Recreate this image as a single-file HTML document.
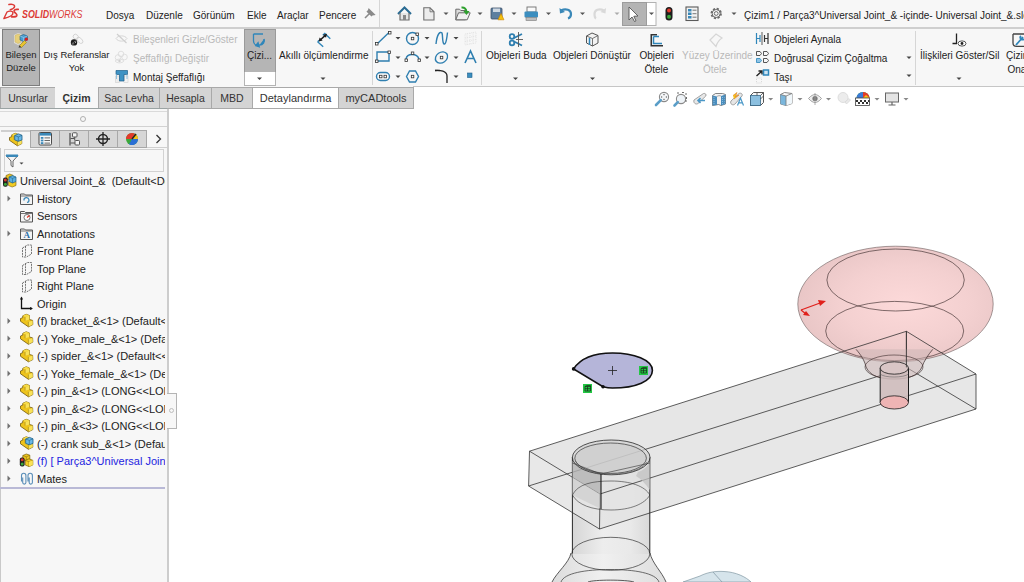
<!DOCTYPE html>
<html><head><meta charset="utf-8">
<style>
*{margin:0;padding:0;box-sizing:border-box}
html,body{width:1024px;height:582px;overflow:hidden;background:#fff;font-family:"Liberation Sans",sans-serif;color:#222}
.a{position:absolute}
.t{position:absolute;white-space:nowrap;line-height:1;font-size:11px}
#menubar{left:0;top:0;width:1024px;height:27px;background:#f7f7f7}
#sep1{left:0;top:27px;width:1024px;height:2px;background:#cfcfcf}
#ribbon{left:0;top:29px;width:1024px;height:58px;background:#f7f7f7}
#ribline{left:413px;top:86px;width:611px;height:2px;background:#c6c6c6}
#tabs{left:0;top:87px;width:1024px;height:21px;background:#fff}
.tab{position:absolute;top:87px;height:22px;background:#d4d4d4;border:1px solid #a9a9a9;font-size:10.5px;text-align:center;line-height:20px;color:#333}
#left{left:0;top:108px;width:167px;height:474px;background:#f7f7f7}
#lborder{left:167px;top:108px;width:2px;height:474px;background:#cdcdcd}
.tree{position:absolute;left:36px;font-size:11px;white-space:nowrap;line-height:1;color:#222}
.dis{color:#b9b9b9}
.vsep{position:absolute;width:1px;background:#d6d6d6}
.arr{position:absolute;width:0;height:0;border-left:3px solid transparent;border-right:3px solid transparent;border-top:3px solid #444}
</style></head><body>
<div id="menubar" class="a"></div>
<div id="sep1" class="a"></div>
<div id="ribbon" class="a"></div>
<div id="ribline" class="a"></div>
<div id="tabs" class="a"></div>
<div id="left" class="a"></div>
<div id="lborder" class="a"></div>


<!-- VIEWPORT -->
<svg class="a" style="left:0;top:0" width="1024" height="582" viewBox="0 0 1024 582">
<defs>
<radialGradient id="tor" cx="0.55" cy="0.5" r="0.6">
<stop offset="0" stop-color="#fcd5d5"/><stop offset="0.55" stop-color="#f2cbcb"/><stop offset="1" stop-color="#e4bebe"/>
</radialGradient>
<linearGradient id="cyl" x1="0" x2="1" y1="0" y2="0">
<stop offset="0" stop-color="#d6d6d6"/><stop offset="0.4" stop-color="#ededed"/><stop offset="0.75" stop-color="#e9e9e9"/><stop offset="1" stop-color="#d9d9d9"/>
</linearGradient>
<linearGradient id="bulb" x1="0" x2="1" y1="0" y2="0">
<stop offset="0" stop-color="#dcdcdc"/><stop offset="0.45" stop-color="#f0f0f0"/><stop offset="1" stop-color="#dedede"/>
</linearGradient>
</defs>
<!-- bulb bottom -->
<path d="M571,553 C569,563 557,572 552,582 L666,582 C662,572 652,563 650,553 Z" fill="url(#bulb)"/>
<path d="M571,553 C569,563 557,572 552,582 M650,553 C652,563 662,572 666,582" fill="none" stroke="#333" stroke-width="0.8"/>
<path d="M561,582 C564,573 586,569.5 610,569.5 C634,569.5 656,573 659,582" fill="none" stroke="#333" stroke-width="0.7"/>
<path d="M588,582 C594,579.5 626,579.5 634,582" fill="none" stroke="#333" stroke-width="0.8"/>
<!-- light blue part -->
<path d="M683,582 L700,576 C708,572 716,571 724,571.5 C736,572 746,577 751,582 Z" fill="#d6e4eb" stroke="#7f96a2" stroke-width="0.7"/>
<path d="M713,572 L722,582" stroke="#7f96a2" stroke-width="0.7"/>
<!-- cylinder body -->
<rect x="572" y="457" width="78" height="97" fill="url(#cyl)"/>
<ellipse cx="610.8" cy="553.8" rx="39" ry="16.5" fill="none" stroke="#333" stroke-width="0.7"/>
<!-- box faces -->
<polygon points="529.5,451.2 906.4,331.3 976,374 600,494" fill="#e0e0e0" fill-opacity="0.8"/>
<polygon points="600,494 976,374 976,409 599.5,529" fill="#e3e3e3" fill-opacity="0.85"/>
<polygon points="529.5,451.2 600,494 599.5,529 528.6,486" fill="#e4e4e4" fill-opacity="0.85"/>
<!-- torus -->
<ellipse cx="895.5" cy="304" rx="97.7" ry="57.8" fill="url(#tor)" fill-opacity="0.9" stroke="#6a5a5a" stroke-width="0.6"/>
<ellipse cx="895.6" cy="280" rx="68.7" ry="31" fill="none" stroke="#4a3a3a" stroke-width="0.7"/>
<ellipse cx="894.7" cy="331" rx="69" ry="29.6" fill="none" stroke="#4a3a3a" stroke-width="0.7"/>
<!-- box edges -->
<g stroke="#2a2a2a" stroke-width="0.75" fill="none">
<path d="M529.5,451.2 L906.4,331.3 L976,374 L600,494 Z"/>
<path d="M528.6,486 L906.4,367.4 L976,409 L599.5,529 Z"/>
<path d="M529.5,451.2 L528.6,486 M906.4,331.3 L906.4,367.4 M976,374 L976,409 M600,494 L599.5,529"/>
</g>
<!-- cylinder edges -->
<line x1="572.4" y1="457" x2="572.4" y2="553.5" stroke="#2a2a2a" stroke-width="1"/>
<line x1="649.8" y1="457" x2="649.8" y2="553.5" stroke="#2a2a2a" stroke-width="1"/>
<!-- nut / cylinder top -->
<polygon points="572.4,461 601,474 601,494.5 572.4,477" fill="#b4b4b4" fill-opacity="0.8"/>
<polygon points="572.4,477 601,494.5 601,509 572.4,495" fill="#cdcdcd" fill-opacity="0.7"/>
<path d="M649.8,461 L649.8,490 C646,484 641,479 636,476 L638,472 C644,470 648,466 649.8,461 Z" fill="#c2c2c2" fill-opacity="0.75"/>
<ellipse cx="611.2" cy="457.4" rx="38.8" ry="17.4" fill="#d2d2d2" fill-opacity="0.7" stroke="#2a2a2a" stroke-width="0.8"/>
<ellipse cx="610.6" cy="458.2" rx="35.8" ry="15.2" fill="#cccccc" fill-opacity="0.6" stroke="#333" stroke-width="0.7"/>
<path d="M575.5,461 C580,470 595,474 611,474 C628,474 642,470 647,462" fill="none" stroke="#555" stroke-width="0.6"/>
<path d="M572.4,495 C578,484 592,481 611,481 C630,481 645,486 649.8,495 C645,504 630,510 611,510 C592,510 578,505 572.4,495" fill="none" stroke="#333" stroke-width="0.6"/>
<line x1="601" y1="474" x2="601" y2="509" stroke="#1a1a1a" stroke-width="1.1"/>
<path d="M572.4,463 L601,474 L650,463" fill="none" stroke="#333" stroke-width="0.6"/>
<!-- small cylinder under torus -->
<path d="M856,349.3 C862,356 865,362 866,367 C870,376 880,379 894,379 C908,379 918,376 922,367 C924,361 928,355 932.8,349.3" fill="#cdb6b6" fill-opacity="0.55" stroke="#3a2a2a" stroke-width="0.7"/>
<ellipse cx="894" cy="367" rx="29" ry="12" fill="none" stroke="#3a2a2a" stroke-width="0.6"/>
<rect x="880.2" y="368" width="28.3" height="34.4" fill="#cfbcbc" fill-opacity="0.9"/>
<line x1="880.2" y1="368" x2="880.2" y2="402.4" stroke="#1a1a1a" stroke-width="1"/>
<line x1="908.5" y1="368" x2="908.5" y2="402.4" stroke="#1a1a1a" stroke-width="1"/>
<ellipse cx="894.3" cy="402.4" rx="14.2" ry="6.6" fill="#eeb4b4" stroke="#1a1a1a" stroke-width="0.8"/>
<ellipse cx="894.3" cy="368" rx="14.2" ry="6.2" fill="#d9c6c6" stroke="#1a1a1a" stroke-width="0.8"/>
<path d="M880.2,374 C884,378 904,378 908.5,374" fill="none" stroke="#555" stroke-width="0.5"/>
<line x1="906.4" y1="331.3" x2="906.4" y2="367.4" stroke="#2a2a2a" stroke-width="0.7"/>
<!-- red triad -->
<g stroke="#e0201b" stroke-width="1.3" fill="#e0201b">
<line x1="801" y1="310" x2="820" y2="303"/>
<polygon points="826,301 818,300 820,306" stroke="none"/>
<line x1="801" y1="310" x2="806" y2="314"/>
<polygon points="810,316 803,315 806,311" stroke="none"/>
</g>
<!-- sketch -->
<path d="M573.6,368.9 C582,356 598,353 612.5,353 C634,353 652.4,360 652.4,370.5 C652.4,381 636,388 612.5,388 C609,388 606,387.5 603,386.8 Z" fill="#b5b5d9" stroke="#111" stroke-width="1.6"/>
<circle cx="573.6" cy="368.9" r="1.8" fill="#111"/>
<circle cx="603" cy="386.8" r="1.8" fill="#111"/>
<path d="M608,370.5 h9 M612.5,366 v9" stroke="#222" stroke-width="0.8"/>
<rect x="639" y="366" width="9" height="9" fill="#22c744"/>
<rect x="583" y="384" width="9" height="9" fill="#22c744"/>
<g fill="none" stroke="#1a2a1a" stroke-width="0.7">
<path d="M641,368.5 L643,367.5 H646.5 V373 H641 Z M641,368.5 H646.5 M643.5,368.5 V373 M641,370.7 H646.5"/>
<path d="M585,386.5 L587,385.5 H590.5 V391 H585 Z M585,386.5 H590.5 M587.5,386.5 V391 M585,388.7 H590.5"/>
</g>
</svg>
<!-- MENU -->
<div class="t" style="left:22px;top:10px;font-size:10.3px;font-weight:bold;font-style:italic;color:#dc3a36;transform:scaleX(0.86);transform-origin:0 0">SOLID<span style="font-weight:normal">WORKS</span></div>
<div class="t" style="left:106px;top:11px;font-size:10px">Dosya</div>
<div class="t" style="left:146px;top:11px;font-size:10px">Düzenle</div>
<div class="t" style="left:193px;top:11px;font-size:10px">Görünüm</div>
<div class="t" style="left:247px;top:11px;font-size:10px">Ekle</div>
<div class="t" style="left:277px;top:11px;font-size:10px">Araçlar</div>
<div class="t" style="left:319px;top:11px;font-size:10px">Pencere</div>
<div class="t" style="left:744px;top:11px;font-size:10px">Çizim1 / Parça3^Universal Joint_&amp; -içinde- Universal Joint_&amp;.sldasm</div>

<!-- RIBBON -->
<div class="a" style="left:2px;top:29px;width:38px;height:57px;background:#b5b5b5;border:1px solid #7d7d7d"></div>
<div class="t" style="left:3px;top:50px;width:36px;text-align:center;font-size:9.5px">Bileşen</div>
<div class="t" style="left:3px;top:63px;width:36px;text-align:center;font-size:9.5px">Düzele</div>
<div class="t" style="left:42px;top:50px;width:69px;text-align:center;font-size:9.5px">Dış Referanslar</div>
<div class="t" style="left:42px;top:63px;width:69px;text-align:center;font-size:9.5px">Yok</div>
<div class="t dis" style="left:133px;top:35px;font-size:10px">Bileşenleri Gizle/Göster</div>
<div class="t dis" style="left:133px;top:54px;font-size:10px">Şeffaflığı Değiştir</div>
<div class="t" style="left:133px;top:72.5px;font-size:10px">Montaj Şeffaflığı</div>

<div class="a" style="left:244px;top:29px;width:32px;height:57px;background:#fff;border:1px solid #b4b4b4"></div>
<div class="a" style="left:244px;top:29px;width:32px;height:43px;background:#b5b5b5;border:1px solid #9a9a9a;border-bottom:none"></div>
<div class="t" style="left:247px;top:51px;font-size:10px">Çizi...</div>
<div class="t" style="left:279px;top:51px;font-size:10px">Akıllı ölçümlendirme</div>
<div class="vsep" style="left:372px;top:31px;height:54px"></div>
<div class="vsep" style="left:481px;top:31px;height:54px"></div>
<div class="t" style="left:486px;top:51px;font-size:10px">Objeleri Buda</div>
<div class="t" style="left:553px;top:51px;font-size:10px">Objeleri Dönüştür</div>
<div class="t" style="left:639.5px;top:51px;font-size:10px">Objeleri</div>
<div class="t" style="left:644.5px;top:64.5px;font-size:10px">Ötele</div>
<div class="t dis" style="left:682px;top:51px;font-size:10px">Yüzey Üzerinde</div>
<div class="t dis" style="left:703px;top:64.5px;font-size:10px">Ötele</div>
<div class="t" style="left:774px;top:34.5px;font-size:10px">Objeleri Aynala</div>
<div class="t" style="left:774px;top:54px;font-size:10px">Doğrusal Çizim Çoğaltma</div>
<div class="t" style="left:774px;top:73px;font-size:10px">Taşı</div>
<div class="vsep" style="left:915px;top:31px;height:54px"></div>
<div class="t" style="left:920px;top:51px;font-size:10px">İlişkileri Göster/Sil</div>
<div class="t" style="left:1006px;top:51px;font-size:10px">Çizim</div>
<div class="t" style="left:1007.5px;top:64.5px;font-size:10px">Onay</div>

<!-- TABS -->
<div class="tab" style="left:0;width:56px">Unsurlar</div>
<div class="tab" style="left:55px;width:43px;background:#f7f7f7;border-color:#f7f7f7;font-weight:bold">Çizim</div>
<div class="tab" style="left:98px;width:62px">Sac Levha</div>
<div class="tab" style="left:159px;width:53px">Hesapla</div>
<div class="tab" style="left:211px;width:42px">MBD</div>
<div class="tab" style="left:252px;width:87px;background:#fff;font-size:11px">Detaylandırma</div>
<div class="tab" style="left:338px;width:76px;font-size:11px">myCADtools</div>


<!-- LEFT PANEL DETAILS -->
<div class="a" style="left:0;top:108px;width:167px;height:1px;background:#9aa3a3"></div>
<div class="a" style="left:0;top:111px;width:167px;height:1px;background:#dadada"></div>
<div class="a" style="left:80px;top:116px;width:6px;height:6px;border:1px solid #b0b0b0;border-radius:50%"></div>
<div class="a" style="left:0;top:126px;width:167px;height:1px;background:#d2d2d2"></div>
<div class="a" style="left:1px;top:130px;width:30px;height:2px;background:#cfcfcf"></div>
<div class="a" style="left:30px;top:130px;width:30px;height:18px;background:#d6d6d6;border:1px solid #a8a8a8"></div>
<div class="a" style="left:59px;top:130px;width:30px;height:18px;background:#d6d6d6;border:1px solid #a8a8a8"></div>
<div class="a" style="left:88px;top:130px;width:30px;height:18px;background:#d6d6d6;border:1px solid #a8a8a8"></div>
<div class="a" style="left:117px;top:130px;width:30px;height:18px;background:#d6d6d6;border:1px solid #a8a8a8"></div>
<div class="a" style="left:147px;top:147px;width:20px;height:1px;background:#d0d0d0"></div>
<div class="a" style="left:4px;top:149px;width:160px;height:23px;border:1px solid #d2d2d2"></div>
<div class="a" style="left:0;top:148px;width:1px;height:434px;background:#c9c9c9"></div>
<div class="a" style="left:0;top:487px;width:165px;height:2px;background:#b9b9d6"></div>
<div class="a" style="left:167px;top:393px;width:10px;height:36px;background:#f7f7f7;border:1px solid #b4b4b4;border-left:none"></div>
<div class="a" style="left:169px;top:408px;width:5px;height:5px;border:1px solid #bdbdbd;border-radius:50%"></div>

<!-- TREE -->
<div class="a" style="left:0;top:170px;width:165px;height:320px;overflow:hidden">
<div class="tree" style="left:20px;top:6.3px">Universal Joint_&amp;&nbsp; (Default&lt;Default_Display State-1&gt;)</div>
<div class="tree" style="left:37px;top:23.8px">History</div>
<div class="tree" style="left:37px;top:41.3px">Sensors</div>
<div class="tree" style="left:37px;top:58.8px">Annotations</div>
<div class="tree" style="left:37px;top:76.3px">Front Plane</div>
<div class="tree" style="left:37px;top:93.8px">Top Plane</div>
<div class="tree" style="left:37px;top:111.3px">Right Plane</div>
<div class="tree" style="left:37px;top:128.8px">Origin</div>
<div class="tree" style="left:37px;top:146.3px">(f) bracket_&amp;&lt;1&gt; (Default&lt;&lt;Default&gt;_Display</div>
<div class="tree" style="left:37px;top:163.8px">(-) Yoke_male_&amp;&lt;1&gt; (Default&lt;&lt;Default</div>
<div class="tree" style="left:37px;top:181.3px">(-) spider_&amp;&lt;1&gt; (Default&lt;&lt;Default</div>
<div class="tree" style="left:37px;top:198.8px">(-) Yoke_female_&amp;&lt;1&gt; (Default&lt;&lt;</div>
<div class="tree" style="left:37px;top:216.3px">(-) pin_&amp;&lt;1&gt; (LONG&lt;&lt;LONG&gt;</div>
<div class="tree" style="left:37px;top:233.8px">(-) pin_&amp;&lt;2&gt; (LONG&lt;&lt;LONG&gt;</div>
<div class="tree" style="left:37px;top:251.3px">(-) pin_&amp;&lt;3&gt; (LONG&lt;&lt;LONG&gt;</div>
<div class="tree" style="left:37px;top:268.8px">(-) crank sub_&amp;&lt;1&gt; (Default&lt;Display</div>
<div class="tree" style="left:37px;top:286.3px;color:#2424e0">(f) [ Parça3^Universal Joint_&amp; ]</div>
<div class="tree" style="left:37px;top:303.8px">Mates</div>
</div>
<!-- UI ICONS -->
<svg class="a" style="left:0;top:0;pointer-events:none" width="1024" height="582" viewBox="0 0 1024 582">
<!-- DS logo -->
<g fill="none" stroke="#dc3a36" stroke-linecap="round" stroke-linejoin="round">
<path d="M8.9,4.6 C12,4 15,4.6 14.6,6.6 C14.2,8.2 12,9.2 10.3,9.7" stroke-width="1.5"/>
<path d="M3.9,18.5 L7,12 C9,10.6 12.5,10.8 13,12.6 C13.2,15 8.5,17.4 3.9,18.5" stroke-width="1.4"/>
<path d="M18.2,9.4 C15.5,9 13.6,9.8 14.2,11.6 C14.8,13.2 17.4,13.6 16.8,15.6 C16.3,17 13.5,17 11.6,16.9" stroke-width="1.7"/>
</g>
<!-- menu pin -->
<path d="M365,18 L369,14 M367,11 L372,16 M369,9.5 L374,14.5 L371,15 L368,12 Z" stroke="#8a8a8a" stroke-width="1.6" fill="#8a8a8a"/>
<line x1="379.5" y1="0" x2="379.5" y2="27" stroke="#d6d6d6"/>
<!-- home -->
<path d="M398,14 L404.5,7.5 L411,14" fill="none" stroke="#2a6b93" stroke-width="2"/>
<path d="M400,13 V20 H409 V13" fill="#e6e6e6" stroke="#6f6f6f" stroke-width="1.2"/>
<rect x="403" y="15" width="3" height="5" fill="#888"/>
<!-- new doc -->
<path d="M423.8,7.8 H430 L434,11.8 V20 H423.8 Z" fill="#ececec" stroke="#6f6f6f" stroke-width="1.1"/>
<path d="M430,7.8 V11.8 H434" fill="none" stroke="#6f6f6f" stroke-width="0.9"/>
<!-- open folder -->
<path d="M455.8,9.2 H459.5 L460.8,10.5 H465.5 V19.8 H455.8 Z" fill="#dcdcdc" stroke="#6a6a6a" stroke-width="1"/>
<path d="M458.5,12.8 H470.2 L467.2,19.8 H455.8 Z" fill="#f0f0f0" stroke="#6a6a6a" stroke-width="1"/>
<path d="M461.5,7.6 C464.5,7.3 466.3,8.8 466.5,12" fill="none" stroke="#2ea02e" stroke-width="2"/>
<path d="M463.3,11 L466.5,15 L469.5,11 Z" fill="#2ea02e"/>
<!-- save -->
<rect x="491" y="8" width="11" height="11" rx="1" fill="#5d7fa0" stroke="#3d4f66" stroke-width="0.8"/>
<rect x="493" y="8.5" width="7" height="3.5" fill="#cfd8e2"/>
<path d="M498,19.8 L501,13.5 L504,19.8 Z" fill="#f4c20d" stroke="#d08400" stroke-width="0.6"/>
<!-- print -->
<rect x="527" y="7" width="9" height="5" fill="#fafafa" stroke="#6f6f6f" stroke-width="0.9"/>
<rect x="524.5" y="11.5" width="13.5" height="6" rx="1" fill="#3c8ebf"/>
<rect x="526" y="17.5" width="10.5" height="3" fill="#bdbdbd" stroke="#7a7a7a" stroke-width="0.6"/>
<!-- undo -->
<path d="M561,10.5 C566,8 571,10 571,14 C571,16.5 569.5,18 568,18.5" fill="none" stroke="#3a88b8" stroke-width="2.2"/>
<path d="M559.5,8 L560,13.5 L565,12 Z" fill="#3a88b8"/>
<!-- redo -->
<path d="M604,10.5 C599,8 594.5,10 594.5,14 C594.5,16.5 595,18 596,18.5" fill="none" stroke="#d9d9d9" stroke-width="2.2"/>
<path d="M606,8 L605.5,13.5 L600.5,12 Z" fill="#d9d9d9"/>
<!-- select button -->
<rect x="622.5" y="2.5" width="33.5" height="23" fill="#fff" stroke="#b2b2b2"/>
<rect x="622.5" y="2.5" width="24" height="23" fill="#b4b4b4" stroke="#9c9c9c"/>
<path d="M629,7 V20 L632,17 L634.5,21.5 L636,20.8 L633.8,16.3 L638,16 Z" fill="#fff" stroke="#555" stroke-width="0.9"/>
<!-- traffic light -->
<rect x="665.5" y="7" width="7" height="13.5" rx="3.5" fill="#1d1d1d"/>
<circle cx="669" cy="10.5" r="2" fill="#e53b2c"/>
<circle cx="669" cy="16.8" r="2" fill="#3aa83a"/>
<!-- options list -->
<rect x="686" y="7" width="12" height="13.5" fill="#f2f2f2" stroke="#5a5a5a" stroke-width="1.1"/>
<rect x="688" y="9" width="3.5" height="2.5" fill="#3a88b8"/><rect x="688" y="12.5" width="3.5" height="2.5" fill="#3a88b8"/><rect x="688" y="16" width="3.5" height="2.5" fill="#3a88b8"/>
<path d="M692.5,10.2 H696.5 M692.5,13.7 H696.5 M692.5,17.2 H696.5" stroke="#6a6a6a" stroke-width="0.9"/>
<!-- gear -->
<circle cx="716.2" cy="13.5" r="4.8" fill="none" stroke="#6a6a6a" stroke-width="1.8" stroke-dasharray="2.2 1.55"/>
<circle cx="716.2" cy="13.5" r="4" fill="none" stroke="#6a6a6a" stroke-width="1"/>
<circle cx="716.2" cy="13.5" r="1.9" fill="none" stroke="#6a6a6a" stroke-width="1"/>
<!-- menu dropdown arrows -->
<g fill="#555">
<path d="M443.5,12.5 h5 l-2.5,2.5 z"/><path d="M477.5,12.5 h5 l-2.5,2.5 z"/><path d="M511.5,12.5 h5 l-2.5,2.5 z"/><path d="M546,12.5 h5 l-2.5,2.5 z"/><path d="M580,12.5 h5 l-2.5,2.5 z"/>
<path d="M614.5,12.5 h5 l-2.5,2.5 z" fill="#aaa"/><path d="M649,12.5 h5 l-2.5,2.5 z"/><path d="M731.5,12.5 h5 l-2.5,2.5 z"/>
</g>

<!-- RIBBON ICONS -->
<!-- bilesen duzele -->
<path d="M14,35 L18,33 L21.5,34 V43.5 L18,45 L14,43 Z" fill="#f3f0e6" opacity="0.7"/>
<path d="M15,35.5 L18,34 L20.5,35 V42.5 L18,43.5 L15,42 Z" fill="#e6cf7a" stroke="#c8b060" stroke-width="0.5"/>
<path d="M20,36 L23.5,34.5 L27.5,36 V40 L23.5,41.5 L20,40 Z" fill="#4a9cd0" stroke="#1f5a80" stroke-width="0.6"/>
<path d="M20,36 L23.5,37.5 L27.5,36 M23.5,37.5 V41.5" fill="none" stroke="#a8d4ee" stroke-width="0.6"/>
<circle cx="26.3" cy="39.2" r="1.6" fill="#d81c1c"/>
<path d="M19.5,45.5 L24.5,40.5 L26.5,42.5 L21.5,47.5 Z" fill="#e8c430" stroke="#8a7010" stroke-width="0.5"/>
<path d="M18.5,47.5 L19.5,45.5 L21.5,47.5 Z" fill="#333"/>
<!-- dis referans -->
<ellipse cx="75.8" cy="36.8" rx="2.8" ry="2.3" fill="none" stroke="#d2d2d2" stroke-width="0.9" transform="rotate(40 75.8 36.8)"/>
<ellipse cx="79.8" cy="40.3" rx="3.8" ry="2.2" fill="none" stroke="#d2d2d2" stroke-width="0.9" transform="rotate(45 79.8 40.3)"/>
<circle cx="74" cy="42.4" r="3.2" fill="#1e1e1e"/>
<path d="M72.3,43.6 L73.3,42.4 M74.6,42 L75.6,40.8 M72.8,44.6 L73.8,43.4 M75.1,43 L76.1,41.8" stroke="#e8e8e8" stroke-width="0.7"/>
<!-- small row icons -->
<g stroke="#d6d6d6" stroke-width="1" fill="none">
<path d="M116,38.5 C118,35 125,35 127,38.5 C125,42 118,42 116,38.5 Z"/>
</g>
<path d="M117,34 L126.5,43" stroke="#cfcfcf" stroke-width="1.2"/>
<g stroke="#dcdcdc" stroke-width="0.9" fill="none">
<circle cx="121" cy="54" r="2.8"/><circle cx="124.5" cy="57" r="2.8"/><circle cx="118" cy="57.5" r="2.8"/>
<path d="M115,61 C117,58.5 122,58.5 124,61 C122,63.5 117,63.5 115,61 Z"/>
</g>
<circle cx="119.5" cy="61" r="1.2" fill="#d0d0d0"/>
<rect x="115.5" y="76" width="4" height="6.5" fill="#ececec" stroke="#cfcfcf" stroke-width="0.6"/>
<rect x="124" y="76" width="4" height="6.5" fill="#f4f4f4" stroke="#cfcfcf" stroke-width="0.6"/>
<path d="M116,70.5 H127.5 V74.5 H124 V81 H119.5 V74.5 H116 Z" fill="#3f93c4" stroke="#1f5f8a" stroke-width="0.7"/>
<path d="M116.5,74.5 V79 M127,74.5 V79" stroke="#8fc0de" stroke-width="1"/>
<!-- cizim sketch icon -->
<path d="M253.5,34 H263 M253.5,34 V41 C253.5,44 256,45.5 258,45.5" fill="none" stroke="#2f86ba" stroke-width="1.3"/>
<path d="M264,39 C265,42 263,45 259.5,45 M258,43 L259,46.5 L256,45.5 Z" fill="#2f86ba" stroke="#2f86ba" stroke-width="1.6"/>
<!-- smart dim -->
<path d="M322.8,35.2 L324.8,33.4 L330.3,38.8 M317.6,41.8 L323.2,46.8 M317.6,41.8 L319.2,40.4" fill="none" stroke="#2f86ba" stroke-width="1.4"/>
<path d="M320.5,39.8 L325,35.6" stroke="#1e1e1e" stroke-width="1.5"/>
<path d="M318.6,41.6 L319.6,37.6 L322.6,40.6 Z M327,33.8 L323,34.8 L326,37.8 Z" fill="#1e1e1e"/>
<!-- sketch grid -->
<g fill="none" stroke="#2f7fb0" stroke-width="1.4">
<path d="M377,44 L389.5,32"/>
<circle cx="412.5" cy="38.5" r="6"/>
<path d="M436,44 C437,34 440,31 442,33 C443,36 442,42 444,44 C446,45 447,37 447.5,32.5"/>
<path d="M377,52 H389 V61 H377 Z"/>
<path d="M406,59 C407,53 417,53 419,59"/>
<ellipse cx="441.5" cy="57.5" rx="6.5" ry="5.2" transform="rotate(-35 441.5 57.5)"/>
<rect x="376.5" y="72.5" width="13" height="8" rx="4"/>
<path d="M406.5,76.5 L409.5,71 H415.5 L418.5,76.5 L415.5,82 H409.5 Z"/>
</g>
<path d="M435,70.5 C440,70 447,71 447,76 V83" fill="none" stroke="#222" stroke-width="1.3"/>
<path d="M435,70.5 H440" stroke="#222" stroke-width="1.3"/>
<g fill="#fff" stroke="#333" stroke-width="0.8">
<rect x="375.5" y="42.5" width="2.5" height="2.5"/><rect x="388.5" y="31.5" width="2.5" height="2.5"/>
<rect x="411.3" y="37.3" width="2.5" height="2.5"/><rect x="416" y="33" width="2.5" height="2.5"/>
<rect x="375.5" y="60" width="2.5" height="2.5"/><rect x="388" y="51" width="2.5" height="2.5"/>
<rect x="405" y="59" width="2.5" height="2.5"/><rect x="411.3" y="52" width="2.5" height="2.5"/><rect x="418" y="59" width="2.5" height="2.5"/>
<rect x="440.3" y="56.3" width="2.5" height="2.5"/>
<rect x="379.5" y="75.3" width="2.5" height="2.5"/><rect x="384" y="75.3" width="2.5" height="2.5"/>
<rect x="411.3" y="75.3" width="2.5" height="2.5"/>
</g>
<g fill="none" stroke="#dedede" stroke-width="0.8" stroke-dasharray="1 1">
<path d="M465,34 L476,32 V43 L465,45 Z M467,33.5 V44.7 M470,33 V44 M473,32.5 V43.5 M465,38 L476,36 M465,41.5 L476,39.5"/>
</g>
<path d="M465,63 L470.5,51 L476,63 M467,58.5 H474" fill="none" stroke="#2f7fb0" stroke-width="1.6"/>
<rect x="467.5" y="73" width="4.5" height="4.5" fill="#3a8ebf" stroke="#1f5f8a" stroke-width="0.6"/>
<!-- dropdown small arrows ribbon -->
<g fill="#444">
<path d="M395.5,37 h5 l-2.5,2.5 z"/><path d="M424.5,37 h5 l-2.5,2.5 z"/><path d="M453.5,37 h5 l-2.5,2.5 z"/>
<path d="M395.5,56.5 h5 l-2.5,2.5 z"/><path d="M424.5,56.5 h5 l-2.5,2.5 z"/><path d="M453.5,56.5 h5 l-2.5,2.5 z"/>
<path d="M395.5,75.5 h5 l-2.5,2.5 z"/><path d="M453.5,75.5 h5 l-2.5,2.5 z"/>
<path d="M257,77.5 h5 l-2.5,2.5 z"/><path d="M320.5,77.5 h5 l-2.5,2.5 z"/>
<path d="M513,77.5 h5 l-2.5,2.5 z"/><path d="M590,77.5 h5 l-2.5,2.5 z"/>
<path d="M906.5,56.5 h5 l-2.5,2.5 z"/><path d="M906.5,74.5 h5 l-2.5,2.5 z"/><path d="M956.5,77.5 h5 l-2.5,2.5 z"/>
</g>
<!-- buda scissors -->
<g fill="none" stroke="#2f7fb0" stroke-width="1.8">
<circle cx="512" cy="36.5" r="2.3"/><circle cx="512" cy="43" r="2.3"/>
<path d="M514,38 L522,34 M514,41.5 L522,45.5"/>
</g>
<path d="M518.5,32 V47 M516,39.5 H523" stroke="#555" stroke-width="0.9"/>
<!-- donustur cube -->
<path d="M586.5,36 L592,33 L598,35.5 V43 L592.5,46 L586.5,43 Z" fill="#f3f3f3" stroke="#555" stroke-width="1"/>
<path d="M586.5,36 L592.5,38.5 L598,35.5 M592.5,38.5 V46" fill="none" stroke="#555" stroke-width="0.8"/>
<path d="M589.5,38 V45" stroke="#2f86ba" stroke-width="1.5"/>
<!-- otele -->
<path d="M650.5,34 H657 V35.5 H652 V45 H663 V46.5 H650.5 Z" fill="#333"/>
<path d="M653.5,36.5 H659 M653.5,36.5 V43.5 H662" fill="none" stroke="#2f86ba" stroke-width="1.5"/>
<!-- yuzey (disabled) -->
<path d="M710,40 L716,34 L722,38 C719,40 717,43 716,46.5 Z" fill="none" stroke="#d6d6d6" stroke-width="1.2"/>
<!-- aynala -->
<path d="M756.5,33 V44 M756.5,38.5 H760 M760,35 V42" fill="none" stroke="#2f86ba" stroke-width="1.2"/>
<path d="M762,32 V45" stroke="#888" stroke-width="1.4"/>
<path d="M768,33 V44 M768,38.5 H764.5 M764.5,35 V42" fill="none" stroke="#333" stroke-width="1.2"/>
<!-- dogrusal -->
<path d="M756.5,51.5 H760 L761.5,53.5 L760,55.5 H756.5 Z M763.5,51.5 H767 L768.5,53.5 L767,55.5 H763.5 Z M763.5,58.5 H767 L768.5,60.5 L767,62.5 H763.5 Z" fill="none" stroke="#444" stroke-width="0.9"/>
<path d="M756.5,58.5 H760 L761.5,60.5 L760,62.5 H756.5 Z" fill="#8fc4e6" stroke="#3a8ebf" stroke-width="0.9"/>
<!-- tasi -->
<path d="M756.5,76 L762,71 M758.5,71 H762 V74.5" fill="none" stroke="#222" stroke-width="1.4"/>
<rect x="763.5" y="70" width="5" height="5" fill="#cfe5f3" stroke="#2f86ba" stroke-width="1.5"/>
<rect x="756.5" y="78" width="5" height="5" fill="none" stroke="#ccc" stroke-width="0.7" stroke-dasharray="1 1"/>
<!-- iliskiler -->
<path d="M956.5,33.5 V43.5 M952.5,43.5 H957" stroke="#222" stroke-width="1.3"/>
<ellipse cx="962" cy="43.5" rx="4" ry="2.6" fill="#fff" stroke="#444" stroke-width="0.9"/>
<circle cx="962" cy="43.5" r="1.4" fill="#222"/>
<!-- cizim onay -->
<path d="M1013,34 H1024 M1013,34 V43 C1013,45 1014.5,46.3 1016.5,46.3 H1024" fill="none" stroke="#444" stroke-width="1.3"/>
<path d="M1016,45 L1023,37 M1021,36 A2,2 0 1 0 1024,39" fill="none" stroke="#2f86ba" stroke-width="1.8"/>
<!-- HEADS-UP TOOLBAR -->
<g>
<circle cx="664" cy="97" r="4.6" fill="#f4f6f8" stroke="#8a8a8a" stroke-width="1.1"/>
<path d="M664,94 v1.2 M664,98.8 v1.2 M661,97 h1.2 M665.8,97 h1.2" stroke="#444" stroke-width="1"/>
<path d="M660.8,100.2 L656,105" stroke="#5a9ec8" stroke-width="2.6" stroke-linecap="round"/>
<circle cx="681" cy="99" r="4.6" fill="#eef3f7" stroke="#8a8a8a" stroke-width="1.1"/>
<path d="M677.8,102.2 L674.5,105.5" stroke="#5a9ec8" stroke-width="2.6" stroke-linecap="round"/>
<path d="M677,93 h2 M682,92.5 h2 M686,93 v2 M686.5,97 v2 M685,101 h2" stroke="#444" stroke-width="0.8"/>
<path d="M694,100 L703.5,93.5 C705.5,93 706.5,94.5 705.8,96 L698,103.5 C696,105 693,103 694,100 Z" fill="#e8e8e8" stroke="#999" stroke-width="0.9"/>
<path d="M698,100.5 H705 M700.5,98 L698,100.5 L700.5,103" fill="none" stroke="#4a98c8" stroke-width="1.6"/>
<path d="M712.5,95.5 L715.5,93.5 H722.5 L725.5,94.5 V104 L721,105.5 L718.5,104.5 L712.5,105.5 Z" fill="#f2f2f2" stroke="#666" stroke-width="0.8"/>
<path d="M712.5,95.5 L717,96.5 V105 L712.5,105.5 Z" fill="#4a8dbd"/>
<path d="M721,96 L725.5,94.5 V104 L721,105.5 Z" fill="#4a8dbd"/>
<path d="M717,96.5 C718,95.5 720,95.5 721,96" fill="none" stroke="#888" stroke-width="0.7"/>
<path d="M713.5,97.5 h2 M713.5,99.5 h2 M713.5,101.5 h2 M713.5,103.5 h2 M722,97.5 h2.5 M722,99.5 h2.5 M722,101.5 h2.5 M722,103.5 h2.5" stroke="#9cc8e6" stroke-width="0.8" stroke-dasharray="1 1"/>
<path d="M731,101 L739,93.5 C741,92.5 743,94 742,96 L735,104 C733,106 729.5,104 731,101 Z" fill="#e6e6e6" stroke="#999" stroke-width="0.9"/>
<path d="M733,95.5 L737,92.5 L735.5,96.5 L739,95 L734,99" fill="#f6c21a" stroke="#e07a20" stroke-width="0.6"/>
<path d="M737.5,105.5 L740.5,98 L743.5,105.5 M738.8,102.8 H742.3" fill="none" stroke="#4a98c8" stroke-width="1.2"/>
<path d="M750.5,95.5 L753.5,92.5 H763.5 V102.5 L760.5,105.5 H750.5 Z" fill="#f7f7f7" stroke="#444" stroke-width="0.9"/>
<rect x="750.5" y="95.5" width="10" height="10" fill="#8cc0e0" stroke="#3a6a8a" stroke-width="0.8"/>
<path d="M760.5,95.5 L763.5,92.5 M757,92.5 V95.5 M760.5,99 L763.5,96" stroke="#444" stroke-width="0.8"/>
<path d="M780.5,94.5 L784.5,92.5 L792,93.5 V103.5 L786,105.5 L780.5,104 Z" fill="#fafafa" stroke="#777" stroke-width="0.9"/>
<path d="M780.5,94.5 L786,96 V105.5 L780.5,104 Z" fill="#7ab6dc"/>
<path d="M786,96 L792,93.5 V103.5 L786,105.5 Z" fill="#f0f7fb"/>
<path d="M780.5,94.5 L786,96 L792,93.5 M786,96 V105.5" fill="none" stroke="#777" stroke-width="0.8"/>
<path d="M808.5,98.5 C811,95.5 813.5,94.5 815,94.5 C816.5,94.5 819,95.5 821.5,98.5 C819,101.5 816.5,102.5 815,102.5 C813.5,102.5 811,101.5 808.5,98.5 Z" fill="#eee" stroke="#9a9a9a" stroke-width="0.9"/>
<circle cx="815" cy="98.5" r="2.6" fill="#7a7a7a"/>
<path d="M815,93 V105" stroke="#9a9a9a" stroke-width="0.8"/>
<circle cx="843" cy="97.5" r="5" fill="#ececec" stroke="#dadada" stroke-width="0.9"/>
<path d="M845,102 L849,98.5 L850.5,100 L846.5,104 Z" fill="#eaeaea" stroke="#d8d8d8" stroke-width="0.8"/>
<path d="M856.5,98 A6.5,6 0 0 1 869.5,98 Z" fill="#3aa83a"/>
<path d="M856.5,98 A6.5,6 0 0 1 863,92 V98 Z" fill="#3a7ad6"/>
<path d="M863,92 A6.5,6 0 0 1 869.5,98 H863 Z" fill="#e23a2a"/>
<path d="M863,98 L869.5,98 L866,95 Z" fill="#f3c316"/>
<rect x="855.5" y="98" width="14" height="7.5" fill="#fff" stroke="#444" stroke-width="0.8"/>
<path d="M856,100 h2 v2 h-2 z M860,100 h2 v2 h-2 z M864,100 h2 v2 h-2 z M868,100 h1.5 v2 h-1.5 z M858,102 h2 v2 h-2 z M862,102 h2 v2 h-2 z M866,102 h2 v2 h-2 z" fill="#333"/>
<rect x="885.5" y="93" width="13" height="9" fill="#e4e4e4" stroke="#666" stroke-width="1"/>
<path d="M892,102 V104.5 M888.5,105 H895.5" stroke="#666" stroke-width="1.2"/>
<g fill="#888">
<path d="M768.2,98 h5 l-2.5,2.5 z"/><path d="M797.5,98 h5 l-2.5,2.5 z"/><path d="M826,98 h5 l-2.5,2.5 z"/><path d="M874.5,98 h5 l-2.5,2.5 z"/><path d="M903.5,98 h5 l-2.5,2.5 z"/>
</g>
</g>
</svg>

<!-- TREE ICONS -->
<svg class="a" style="left:0;top:0;pointer-events:none" width="1024" height="582" viewBox="0 0 1024 582">
<path d="M6,175.5 L9.5,174 L13,175.2 V179 L9.5,180.5 L6,179 Z" fill="#e8c020" stroke="#7a6008" stroke-width="0.6"/>
<path d="M8.5,181.5 L12.2,180 L16,181.5 V185.5 L12.2,187 L8.5,185.5 Z" fill="#f2cc24" stroke="#7a6008" stroke-width="0.6"/>
<path d="M9,177 L12.5,175.6 L16,177 V181.5 L12.5,183 L9,181.5 Z" fill="#5aaede" stroke="#1d5f88" stroke-width="0.7"/>
<path d="M9,177 L12.5,178.4 L16,177 M12.5,178.4 V183" fill="none" stroke="#1d5f88" stroke-width="0.5"/>
<rect x="3" y="177.6" width="4.8" height="9.2" rx="2" fill="#1e1e1e"/><circle cx="5.4" cy="180" r="1.5" fill="#d83a2a"/><circle cx="5.4" cy="184.3" r="1.5" fill="#3aa83a"/>
<path d="M20.5,194.0 H24.5 L25.5,195.0 H32.5 V204.5 H20.5 Z" fill="#f4f4f4" stroke="#555" stroke-width="1"/><path d="M20.5,196.0 H32.5" stroke="#555" stroke-width="0.8"/>
<path d="M20.5,211.5 H24.5 L25.5,212.5 H32.5 V222.0 H20.5 Z" fill="#f4f4f4" stroke="#555" stroke-width="1"/><path d="M20.5,213.5 H32.5" stroke="#555" stroke-width="0.8"/>
<path d="M20.5,229.0 H24.5 L25.5,230.0 H32.5 V239.5 H20.5 Z" fill="#f4f4f4" stroke="#555" stroke-width="1"/><path d="M20.5,231.0 H32.5" stroke="#555" stroke-width="0.8"/>
<path d="M7.5,195.5 L10.5,198.5 L7.5,201.5 Z" fill="#707070"/>
<path d="M7.5,230.5 L10.5,233.5 L7.5,236.5 Z" fill="#707070"/>
<path d="M24,200.5 A2.5,2.5 0 1 1 27,202.5" fill="none" stroke="#3a88b8" stroke-width="1.2"/>
<circle cx="27" cy="217.5" r="3" fill="#fff" stroke="#555" stroke-width="0.8"/><path d="M27,217.5 L29.5,215.5" stroke="#e03020" stroke-width="1.2"/>
<text x="23.5" y="238.0" font-family="Liberation Serif" font-size="9" font-weight="bold" fill="#2a6ea8">A</text>
<path d="M22.5,248 L27.5,245 H31.5 V254 L26.5,257 H22.5 Z M25.5,246 V256" fill="none" stroke="#666" stroke-width="0.9" stroke-dasharray="2 0.8"/>
<path d="M22.5,265.5 L27.5,262.5 H31.5 V271.5 L26.5,274.5 H22.5 Z M25.5,263.5 V273.5" fill="none" stroke="#666" stroke-width="0.9" stroke-dasharray="2 0.8"/>
<path d="M22.5,283 L27.5,280 H31.5 V289 L26.5,292 H22.5 Z M25.5,281 V291" fill="none" stroke="#666" stroke-width="0.9" stroke-dasharray="2 0.8"/>
<path d="M21.5,297.5 V308.5 H32" fill="none" stroke="#111" stroke-width="1.3"/><path d="M20,299.5 L21.5,296.5 L23,299.5 Z M30,307.0 L33,308.5 L30,310.0 Z" fill="#111"/>
<path d="M7.5,318 L10.5,321 L7.5,324 Z" fill="#707070"/>
<polygon points="20.5,318.5 22.7,317.7 22.8,315.8 26.2,314.3 29.5,315.5 29.5,319.5 32.6,320.4 32.8,324.6 28.4,326.8 20.5,321.3" fill="#eec41c" stroke="#6e5606" stroke-width="0.8" stroke-linejoin="round"/><polygon points="25.1,316.9 29.5,315.5 29.5,319.5 25.1,320.7" fill="#f9e25a"/><polygon points="28.4,321.9 32.6,320.4 32.8,324.6 28.4,326.8" fill="#f9e25a"/><polygon points="22.8,315.8 26.2,314.3 29.5,315.5 25.1,316.9" fill="#f7dc4a"/><path d="M25.1,316.9 L25.1,320.7 M28.4,321.9 L28.4,326.8" fill="none" stroke="#8a6d0a" stroke-width="0.5"/>
<path d="M7.5,335.5 L10.5,338.5 L7.5,341.5 Z" fill="#707070"/>
<polygon points="20.5,336.0 22.7,335.2 22.8,333.3 26.2,331.8 29.5,333.0 29.5,337.0 32.6,337.9 32.8,342.1 28.4,344.3 20.5,338.8" fill="#eec41c" stroke="#6e5606" stroke-width="0.8" stroke-linejoin="round"/><polygon points="25.1,334.4 29.5,333.0 29.5,337.0 25.1,338.2" fill="#f9e25a"/><polygon points="28.4,339.4 32.6,337.9 32.8,342.1 28.4,344.3" fill="#f9e25a"/><polygon points="22.8,333.3 26.2,331.8 29.5,333.0 25.1,334.4" fill="#f7dc4a"/><path d="M25.1,334.4 L25.1,338.2 M28.4,339.4 L28.4,344.3" fill="none" stroke="#8a6d0a" stroke-width="0.5"/>
<path d="M7.5,353 L10.5,356 L7.5,359 Z" fill="#707070"/>
<polygon points="20.5,353.5 22.7,352.7 22.8,350.8 26.2,349.3 29.5,350.5 29.5,354.5 32.6,355.4 32.8,359.6 28.4,361.8 20.5,356.3" fill="#eec41c" stroke="#6e5606" stroke-width="0.8" stroke-linejoin="round"/><polygon points="25.1,351.9 29.5,350.5 29.5,354.5 25.1,355.7" fill="#f9e25a"/><polygon points="28.4,356.9 32.6,355.4 32.8,359.6 28.4,361.8" fill="#f9e25a"/><polygon points="22.8,350.8 26.2,349.3 29.5,350.5 25.1,351.9" fill="#f7dc4a"/><path d="M25.1,351.9 L25.1,355.7 M28.4,356.9 L28.4,361.8" fill="none" stroke="#8a6d0a" stroke-width="0.5"/>
<path d="M7.5,370.5 L10.5,373.5 L7.5,376.5 Z" fill="#707070"/>
<polygon points="20.5,371.0 22.7,370.2 22.8,368.3 26.2,366.8 29.5,368.0 29.5,372.0 32.6,372.9 32.8,377.1 28.4,379.3 20.5,373.8" fill="#eec41c" stroke="#6e5606" stroke-width="0.8" stroke-linejoin="round"/><polygon points="25.1,369.4 29.5,368.0 29.5,372.0 25.1,373.2" fill="#f9e25a"/><polygon points="28.4,374.4 32.6,372.9 32.8,377.1 28.4,379.3" fill="#f9e25a"/><polygon points="22.8,368.3 26.2,366.8 29.5,368.0 25.1,369.4" fill="#f7dc4a"/><path d="M25.1,369.4 L25.1,373.2 M28.4,374.4 L28.4,379.3" fill="none" stroke="#8a6d0a" stroke-width="0.5"/>
<path d="M7.5,388 L10.5,391 L7.5,394 Z" fill="#707070"/>
<polygon points="20.5,388.5 22.7,387.7 22.8,385.8 26.2,384.3 29.5,385.5 29.5,389.5 32.6,390.4 32.8,394.6 28.4,396.8 20.5,391.3" fill="#eec41c" stroke="#6e5606" stroke-width="0.8" stroke-linejoin="round"/><polygon points="25.1,386.9 29.5,385.5 29.5,389.5 25.1,390.7" fill="#f9e25a"/><polygon points="28.4,391.9 32.6,390.4 32.8,394.6 28.4,396.8" fill="#f9e25a"/><polygon points="22.8,385.8 26.2,384.3 29.5,385.5 25.1,386.9" fill="#f7dc4a"/><path d="M25.1,386.9 L25.1,390.7 M28.4,391.9 L28.4,396.8" fill="none" stroke="#8a6d0a" stroke-width="0.5"/>
<path d="M7.5,405.5 L10.5,408.5 L7.5,411.5 Z" fill="#707070"/>
<polygon points="20.5,406.0 22.7,405.2 22.8,403.3 26.2,401.8 29.5,403.0 29.5,407.0 32.6,407.9 32.8,412.1 28.4,414.3 20.5,408.8" fill="#eec41c" stroke="#6e5606" stroke-width="0.8" stroke-linejoin="round"/><polygon points="25.1,404.4 29.5,403.0 29.5,407.0 25.1,408.2" fill="#f9e25a"/><polygon points="28.4,409.4 32.6,407.9 32.8,412.1 28.4,414.3" fill="#f9e25a"/><polygon points="22.8,403.3 26.2,401.8 29.5,403.0 25.1,404.4" fill="#f7dc4a"/><path d="M25.1,404.4 L25.1,408.2 M28.4,409.4 L28.4,414.3" fill="none" stroke="#8a6d0a" stroke-width="0.5"/>
<path d="M7.5,423 L10.5,426 L7.5,429 Z" fill="#707070"/>
<polygon points="20.5,423.5 22.7,422.7 22.8,420.8 26.2,419.3 29.5,420.5 29.5,424.5 32.6,425.4 32.8,429.6 28.4,431.8 20.5,426.3" fill="#eec41c" stroke="#6e5606" stroke-width="0.8" stroke-linejoin="round"/><polygon points="25.1,421.9 29.5,420.5 29.5,424.5 25.1,425.7" fill="#f9e25a"/><polygon points="28.4,426.9 32.6,425.4 32.8,429.6 28.4,431.8" fill="#f9e25a"/><polygon points="22.8,420.8 26.2,419.3 29.5,420.5 25.1,421.9" fill="#f7dc4a"/><path d="M25.1,421.9 L25.1,425.7 M28.4,426.9 L28.4,431.8" fill="none" stroke="#8a6d0a" stroke-width="0.5"/>
<path d="M7.5,440.5 L10.5,443.5 L7.5,446.5 Z" fill="#707070"/>
<polygon points="20.5,441.0 22.7,440.2 22.8,438.3 26.2,436.8 29.5,438.0 29.5,442.0 32.6,442.9 32.8,447.1 28.4,449.3 20.5,443.8" fill="#eec41c" stroke="#6e5606" stroke-width="0.8" stroke-linejoin="round"/><polygon points="25.1,439.4 29.5,438.0 29.5,442.0 25.1,443.2" fill="#f9e25a"/><polygon points="28.4,444.4 32.6,442.9 32.8,447.1 28.4,449.3" fill="#f9e25a"/><polygon points="22.8,438.3 26.2,436.8 29.5,438.0 25.1,439.4" fill="#f7dc4a"/><path d="M25.1,439.4 L25.1,443.2 M28.4,444.4 L28.4,449.3" fill="none" stroke="#8a6d0a" stroke-width="0.5"/><path d="M25.7,439.0 L29.5,437.4 L33.0,438.8 V443.4 L29.3,444.8 L25.7,443.4 Z" fill="#6ab8e6" stroke="#1d5f88" stroke-width="0.8"/><path d="M25.7,439.0 L29.3,440.4 L33.0,438.8 M29.3,440.4 V444.8" fill="none" stroke="#1d5f88" stroke-width="0.6"/>
<path d="M7.5,458 L10.5,461 L7.5,464 Z" fill="#707070"/>
<path d="M22.8,455.5 L26.3,454 L29.8,455.2 V459.5 L26.3,461 L22.8,459.5 Z" fill="#efc820" stroke="#7a6008" stroke-width="0.7"/>
<path d="M22.8,455.5 L26.3,456.8 L29.8,455.2 M26.3,456.8 V461" fill="none" stroke="#7a6008" stroke-width="0.5"/>
<path d="M25.2,460.3 L29,458.8 L32.8,460.3 V465 L29,466.6 L25.2,465 Z" fill="#f2cc24" stroke="#7a6008" stroke-width="0.7"/>
<path d="M25.2,460.3 L29,461.8 L32.8,460.3 M29,461.8 V466.6" fill="none" stroke="#7a6008" stroke-width="0.5"/>
<path d="M29,461.8 L32.8,460.3 V465 L29,466.6 Z" fill="#fae25a"/>
<rect x="19.8" y="457.4" width="4.8" height="9.2" rx="2" fill="#1e1e1e"/><circle cx="22.2" cy="459.8" r="1.5" fill="#d83a2a"/><circle cx="22.2" cy="464.1" r="1.5" fill="#3aa83a"/>
<path d="M7.5,475.5 L10.5,478.5 L7.5,481.5 Z" fill="#707070"/>
<path d="M21.5,481.5 V475.5 A2.2,2.2 0 0 1 25.9,475.5 V482.5 A1.6,1.6 0 0 1 22.7,482.5 V477.5" fill="none" stroke="#5a8eb8" stroke-width="1.1"/>
<path d="M28,481.5 V475.5 A2.2,2.2 0 0 1 32.4,475.5 V482.5 A1.6,1.6 0 0 1 29.2,482.5 V477.5" fill="none" stroke="#5a8eb8" stroke-width="1.1"/>
<polygon points="9.5,137.5 11.7,136.7 11.8,134.8 15.2,133.3 18.5,134.5 18.5,138.5 21.6,139.4 21.8,143.6 17.4,145.8 9.5,140.3" fill="#eec41c" stroke="#6e5606" stroke-width="0.8" stroke-linejoin="round"/><polygon points="14.1,135.9 18.5,134.5 18.5,138.5 14.1,139.7" fill="#f9e25a"/><polygon points="17.4,140.9 21.6,139.4 21.8,143.6 17.4,145.8" fill="#f9e25a"/><polygon points="11.8,134.8 15.2,133.3 18.5,134.5 14.1,135.9" fill="#f7dc4a"/><path d="M14.1,135.9 L14.1,139.7 M17.4,140.9 L17.4,145.8" fill="none" stroke="#8a6d0a" stroke-width="0.5"/><path d="M14.7,135.5 L18.5,133.9 L22.0,135.3 V139.9 L18.3,141.3 L14.7,139.9 Z" fill="#6ab8e6" stroke="#1d5f88" stroke-width="0.8"/><path d="M14.7,135.5 L18.3,136.9 L22.0,135.3 M18.3,136.9 V141.3" fill="none" stroke="#1d5f88" stroke-width="0.6"/>
<rect x="39" y="132.5" width="12.5" height="12.5" rx="1.2" fill="#f6f6f6" stroke="#4a4a4a" stroke-width="1"/><rect x="39.5" y="133" width="11.5" height="2.6" fill="#3a88b8"/><rect x="40.8" y="137" width="2.6" height="1.8" fill="#3a88b8"/><rect x="40.8" y="139.6" width="2.6" height="1.8" fill="#3a88b8"/><rect x="40.8" y="142.2" width="2.6" height="1.8" fill="#3a88b8"/><path d="M44.5,137.9 h5.5 M44.5,140.5 h5.5 M44.5,143.1 h5.5" stroke="#6a6a6a" stroke-width="1"/>
<path d="M70,133 V145.5" stroke="#555" stroke-width="1.3"/><rect x="72.5" y="132.8" width="4.5" height="4.2" rx="0.8" fill="#f6f6f6" stroke="#555" stroke-width="1"/><rect x="75" y="140.5" width="4.5" height="4.5" rx="0.8" fill="#f6f6f6" stroke="#555" stroke-width="1"/><path d="M70.5,138.5 H74.7 M74.7,137 V140.5 M70.5,143 H75" stroke="#555" stroke-width="1"/>
<circle cx="103" cy="139" r="4.5" fill="none" stroke="#222" stroke-width="1.4"/><path d="M103,132 V146 M96,139 H110" stroke="#222" stroke-width="1.3"/>
<circle cx="132" cy="139" r="6" fill="#3aa83a"/><path d="M132,139 L126,139 A6,6 0 0 1 135,133.8 Z" fill="#e33a2a"/><path d="M132,139 L135,133.8 A6,6 0 0 1 138,139 Z" fill="#f3c316"/><path d="M132,139 L138,139 A6,6 0 0 1 129,144.2 Z" fill="#2a6fd6"/><path d="M132,139 L136,134" stroke="#222" stroke-width="1.5"/>
<path d="M156.5,135 L160.5,139 L156.5,143" fill="none" stroke="#333" stroke-width="1.3"/>
<path d="M6,155.5 H18 L13,161 V167 L11,165.5 V161 Z" fill="#f4f4f4" stroke="#555" stroke-width="0.9"/><rect x="6" y="154.5" width="12" height="2.5" fill="#3a88b8"/><path d="M19.5,162.5 h4 l-2,2 z" fill="#444"/>
</svg>
</body></html>
